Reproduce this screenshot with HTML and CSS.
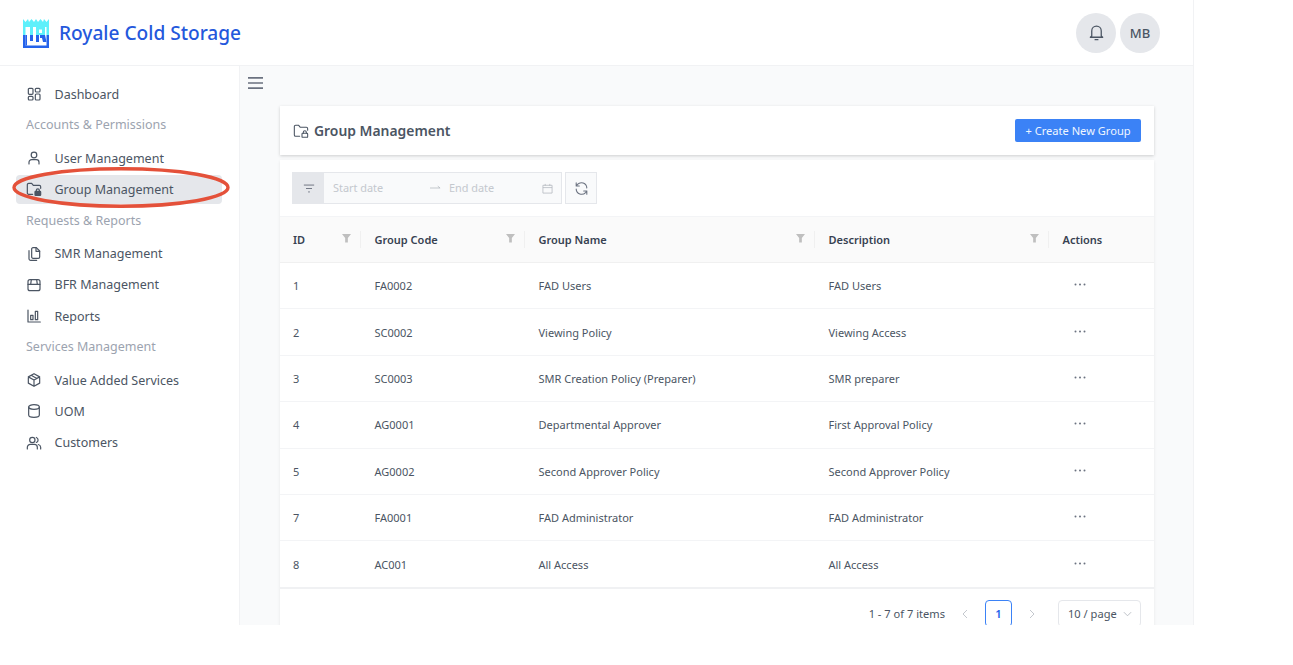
FILE: index.html
```html
<!DOCTYPE html>
<html lang="en">
<head>
<meta charset="utf-8">
<title>Royale Cold Storage</title>
<link rel="stylesheet" href="styles.css">
</head>
<body>
<div class="app">
  <header class="topbar">
    <div class="brand">
      <svg class="logo" viewBox="0 0 26 29" aria-hidden="true">
        <path fill="#5ef0fb" d="M0 0l2.500 3L5 0l1 3 2.500-3 2.500 3L13 0l2 3 2.500-3L20 3l1-3 2.500 3L26 0v16H0z"/>
        <rect fill="#2563eb" y="16" width="26" height="13"/>
        <rect fill="#fff" x="2.500" y="8" width="21" height="18.500"/>
        <rect fill="#5ef0fb" x="7" y="8" width="3" height="8"/>
        <rect fill="#2563eb" x="7" y="16" width="3" height="6"/>
        <rect fill="#2563eb" x="2.500" y="16" width="1.500" height="10.500"/>
        <path fill="#5ef0fb" d="M13 8h9v8h-6v-2h3v-3.500h-3V16h-3z"/>
        <path fill="#2563eb" d="M13 16h3v7h-3zM17 16h5l1.500 7H20l-1-4h-2z"/>
      </svg>
      <span class="brand-name">Royale Cold Storage</span>
    </div>
    <div class="top-actions">
      <button class="round" aria-label="Notifications">
        <svg class="ico-bell" viewBox="0 0 24 24"><path d="M6 16.500V10a6 6 0 0 1 12 0v6.500l1.800 1.500H4.200zM10.200 21h3.600"/></svg>
      </button>
      <div class="round">MB</div>
    </div>
  </header>
  <div class="body">
    <nav class="sidebar">
      <a class="nav-item"><svg class="ico" viewBox="0 0 24 24"><rect x="3.500" y="3.500" width="7" height="9" rx="1.500"/><rect x="14" y="3.500" width="7" height="5.500" rx="1.500"/><rect x="3.500" y="15.500" width="7" height="5.500" rx="1.500"/><rect x="14" y="12" width="7" height="9" rx="1.500"/></svg>Dashboard</a>
      <div class="nav-group">Accounts &amp; Permissions</div>
      <a class="nav-item"><svg class="ico" viewBox="0 0 24 24"><circle cx="12" cy="7.500" r="4.200"/><path d="M4.500 21v-2.500a4 4 0 0 1 4-4h7a4 4 0 0 1 4 4V21"/></svg>User Management</a>
      <a class="nav-item active"><svg class="ico" viewBox="0 0 24 24"><path d="M10 20H4a2 2 0 0 1-2-2V5.500a2 2 0 0 1 2-2h4.500l2.500 3h9a2 2 0 0 1 2 2v2.500"/><rect x="13.500" y="15.500" width="8.500" height="6" rx="1" fill="currentColor"/><path d="M15.500 15.500v-1.500a2.200 2.200 0 0 1 4.500 0v1.500"/></svg>Group Management</a>
      <div class="nav-group">Requests &amp; Reports</div>
      <a class="nav-item"><svg class="ico" viewBox="0 0 24 24"><path d="M8.500 4.500a2 2 0 0 1 2-2h5l5 5v9a2 2 0 0 1-2 2h-8a2 2 0 0 1-2-2z"/><path d="M15 2.500v5.500h5.500M4.500 7v12a2.500 2.500 0 0 0 2.500 2.500h9"/></svg>SMR Management</a>
      <a class="nav-item"><svg class="ico" viewBox="0 0 24 24"><rect x="3" y="4" width="18" height="16.500" rx="3"/><path d="M3 11h18M8 4l-1 7M16 4l1 7"/></svg>BFR Management</a>
      <a class="nav-item"><svg class="ico" viewBox="0 0 24 24"><path d="M3 3v18h18.500"/><rect x="7" y="11" width="3.500" height="6.500"/><rect x="14" y="5" width="3.500" height="12.500"/></svg>Reports</a>
      <div class="nav-group">Services Management</div>
      <a class="nav-item"><svg class="ico" viewBox="0 0 24 24"><path d="M12 2.500l8.500 4.800v9.400L12 21.500l-8.500-4.800V7.300zM3.500 7.300L12 12l8.500-4.700M12 12v9.500M7.700 4.900l8.600 4.800"/></svg>Value Added Services</a>
      <a class="nav-item"><svg class="ico" viewBox="0 0 24 24"><ellipse cx="12" cy="6" rx="8" ry="3.500"/><path d="M4 6v12c0 2 3.600 3.500 8 3.500s8-1.500 8-3.500V6"/></svg>UOM</a>
      <a class="nav-item"><svg class="ico" viewBox="0 0 24 24"><circle cx="9.500" cy="7.500" r="4"/><path d="M2 21v-2.500a4.500 4.500 0 0 1 4.500-4.500h6a4.500 4.500 0 0 1 4.500 4.500V21M15.500 3.700a4 4 0 0 1 0 7.500M18.500 14.300a4.500 4.500 0 0 1 3.500 4.200V21"/></svg>Customers</a>
    </nav>
    <main class="main">
      <button class="menu-btn" aria-label="Toggle menu">
        <svg viewBox="0 0 16 14"><path d="M0 1.500h16M0 7h16M0 12.500h16"/></svg>
      </button>
      <div class="content">
        <section class="title-card">
          <h1 class="title"><svg class="ico" viewBox="0 0 24 24"><path d="M10 20H4a2 2 0 0 1-2-2V5.500a2 2 0 0 1 2-2h4.500l2.500 3h9a2 2 0 0 1 2 2v2.500"/><rect x="13.500" y="15.500" width="8.500" height="6" rx="1"/><path d="M15.500 15.500v-1.500a2.200 2.200 0 0 1 4.500 0v1.500"/></svg>Group Management</h1>
          <button class="primary">+ Create New Group</button>
        </section>
        <section class="table-card">
          <div class="toolbar">
            <div class="range">
              <span class="range-filter"><svg viewBox="0 0 14 10"><path d="M1 1h12M3.500 5h7M6 9h2"/></svg></span>
              <span class="range-start">Start date</span>
              <svg class="range-arrow" viewBox="0 0 12 6"><path d="M0 3h11M8.500 1l2.500 2"/></svg>
              <span class="range-end">End date</span>
              <svg class="range-cal" viewBox="0 0 12 12"><path d="M1 2.500h10v8.500H1zM1 5h10M3.500 1v2M8.500 1v2"/></svg>
            </div>
            <button class="refresh" aria-label="Refresh"><svg viewBox="0 0 24 24"><path d="M20.500 11a8.700 8.700 0 0 0-15-5.500L3.500 8M3.500 13a8.700 8.700 0 0 0 15 5.500l2-2.500M3.500 3v5H8.500M20.500 21v-5H15.500"/></svg></button>
          </div>
          <table class="grid">
            <colgroup><col class="c1"><col class="c2"><col class="c3"><col class="c4"><col class="c5"></colgroup>
            <thead>
              <tr>
                <th><span class="th-in">ID<svg class="funnel" viewBox="0 0 10 10"><path d="M0 0h10L6.500 4.500V9.500H3.500V4.500z"/></svg></span></th>
                <th><span class="th-in">Group Code<svg class="funnel" viewBox="0 0 10 10"><path d="M0 0h10L6.500 4.500V9.500H3.500V4.500z"/></svg></span></th>
                <th><span class="th-in">Group Name<svg class="funnel" viewBox="0 0 10 10"><path d="M0 0h10L6.500 4.500V9.500H3.500V4.500z"/></svg></span></th>
                <th><span class="th-in">Description<svg class="funnel" viewBox="0 0 10 10"><path d="M0 0h10L6.500 4.500V9.500H3.500V4.500z"/></svg></span></th>
                <th>Actions</th>
              </tr>
            </thead>
            <tbody>
              <tr><td>1</td><td>FA0002</td><td>FAD Users</td><td>FAD Users</td><td><svg class="dots" viewBox="0 0 12 3"><circle cx="1.500" cy="1.500" r="1"/><circle cx="6" cy="1.500" r="1"/><circle cx="10.500" cy="1.500" r="1"/></svg></td></tr>
              <tr><td>2</td><td>SC0002</td><td>Viewing Policy</td><td>Viewing Access</td><td><svg class="dots" viewBox="0 0 12 3"><circle cx="1.500" cy="1.500" r="1"/><circle cx="6" cy="1.500" r="1"/><circle cx="10.500" cy="1.500" r="1"/></svg></td></tr>
              <tr><td>3</td><td>SC0003</td><td>SMR Creation Policy (Preparer)</td><td>SMR preparer</td><td><svg class="dots" viewBox="0 0 12 3"><circle cx="1.500" cy="1.500" r="1"/><circle cx="6" cy="1.500" r="1"/><circle cx="10.500" cy="1.500" r="1"/></svg></td></tr>
              <tr><td>4</td><td>AG0001</td><td>Departmental Approver</td><td>First Approval Policy</td><td><svg class="dots" viewBox="0 0 12 3"><circle cx="1.500" cy="1.500" r="1"/><circle cx="6" cy="1.500" r="1"/><circle cx="10.500" cy="1.500" r="1"/></svg></td></tr>
              <tr><td>5</td><td>AG0002</td><td>Second Approver Policy</td><td>Second Approver Policy</td><td><svg class="dots" viewBox="0 0 12 3"><circle cx="1.500" cy="1.500" r="1"/><circle cx="6" cy="1.500" r="1"/><circle cx="10.500" cy="1.500" r="1"/></svg></td></tr>
              <tr><td>7</td><td>FA0001</td><td>FAD Administrator</td><td>FAD Administrator</td><td><svg class="dots" viewBox="0 0 12 3"><circle cx="1.500" cy="1.500" r="1"/><circle cx="6" cy="1.500" r="1"/><circle cx="10.500" cy="1.500" r="1"/></svg></td></tr>
              <tr><td>8</td><td>AC001</td><td>All Access</td><td>All Access</td><td><svg class="dots" viewBox="0 0 12 3"><circle cx="1.500" cy="1.500" r="1"/><circle cx="6" cy="1.500" r="1"/><circle cx="10.500" cy="1.500" r="1"/></svg></td></tr>
            </tbody>
          </table>
          <div class="pager">
            <span class="pager-total">1 - 7 of 7 items</span>
            <svg class="chev" viewBox="0 0 6 10"><path d="M5 1L1 5l4 4"/></svg>
            <span class="page-num">1</span>
            <svg class="chev" viewBox="0 0 6 10"><path d="M1 1l4 4-4 4"/></svg>
            <span class="page-size">10 / page<svg class="chev-down" viewBox="0 0 10 6"><path d="M1 1l4 4 4-4"/></svg></span>
          </div>
        </section>
      </div>
    </main>
  </div>
  <svg class="annotation" viewBox="0 0 218 41" aria-hidden="true"><ellipse cx="109" cy="20.500" rx="107" ry="18.700"/></svg>
</div>
</body>
</html>
```
FILE: styles.css
```css
* { box-sizing: border-box; }
html, body { margin: 0; height: 100%; background: #fff; }
body { font-family: "Noto Sans", "Open Sans", sans-serif; color: #4b5563; overflow: hidden; }
svg { display: block; fill: none; stroke: currentColor; }
button { font: inherit; }

.app { position: relative; width: 1194px; height: 625px; display: flex; flex-direction: column; overflow: hidden; border-right: 1px solid #f1f2f4; }

.topbar { height: 66px; flex: none; display: flex; align-items: center; justify-content: space-between; padding: 0 33px 0 23px; background: #fff; border-bottom: 1px solid #f1f2f4; }
.brand { display: flex; align-items: center; gap: 10px; }
.logo { width: 26px; height: 29px; stroke: none; margin-top: 1px; }
.brand-name { font-size: 19.100px; font-weight: 500; color: #2458dc; }
.top-actions { display: flex; gap: 4px; }
.round { width: 40px; height: 40px; border-radius: 50%; border: 0; padding: 0; background: #e5e7eb; color: #4b5563; display: flex; align-items: center; justify-content: center; font-size: 13px; font-weight: 500; }
.ico-bell { width: 19px; height: 19px; stroke-width: 1.600; stroke-linecap: round; stroke-linejoin: round; }

.body { flex: 1; display: flex; min-height: 0; }
.sidebar { width: 240px; flex: none; background: #fff; border-right: 1px solid #f1f2f4; padding: 12.500px 16px 0; display: flex; flex-direction: column; }
.nav-item { height: 31.200px; display: flex; align-items: center; gap: 12.500px; padding-left: 10px; font-size: 12.500px; color: #4b5563; border-radius: 4px; flex: none; }
.nav-item.active { background: #e5e7eb; height: 29.200px; margin: 1px 0; width: 206px; }
.ico { width: 16px; height: 16px; flex: none; stroke-width: 1.800; stroke-linecap: round; stroke-linejoin: round; }
.nav-group { height: 33px; display: flex; align-items: center; padding: 0 0 3px 10px; font-size: 12.500px; color: #9ca3af; flex: none; }

.main { flex: 1; background: #f9fafb; min-width: 0; display: flex; flex-direction: column; }
.menu-btn { align-self: flex-start; border: 0; background: none; padding: 0; margin: 10px 0 0 8px; color: #6b7280; }
.menu-btn svg { width: 15px; height: 14px; stroke-width: 1.700; }
.content { margin: 16px 39px 0 40px; display: flex; flex-direction: column; gap: 5px; }
.title-card { height: 49px; display: flex; align-items: center; justify-content: space-between; background: #fff; padding: 0 13px; box-shadow: 0 1px 3px rgba(0,0,0,.18); }
.title { margin: 0; display: flex; align-items: center; gap: 5px; font-size: 13.900px; font-weight: 600; color: #4b5563; }
.title .ico { width: 16px; height: 16px; stroke-width: 1.600; }
.primary { height: 23px; width: 126px; border: 0; border-radius: 2px; padding: 0; background: #3b82f6; color: #eff6ff; font-size: 11.100px; }

.table-card { background: #fff; height: 480px; box-shadow: 0 1px 3px rgba(0,0,0,.08); }
.toolbar { display: flex; gap: 3px; padding: 12px; height: 56px; }
.range { width: 270px; height: 32px; display: flex; align-items: center; background: #f9fafb; border: 1px solid #e5e7eb; font-size: 10.900px; color: #c4c8ce; }
.range-filter { width: 31px; height: 30px; flex: none; display: flex; align-items: center; justify-content: center; background: #e5e7eb; color: #6b7280; }
.range-filter svg { width: 12px; height: 9px; stroke-width: 1.100; }
.range-start { margin: 0 0 2px 9px; width: 97px; }
.range-arrow { width: 11px; height: 6px; stroke-width: .8; color: #b0b5bc; }
.range-end { margin: 0 0 2px 8px; width: 93px; }
.range-cal { width: 11px; height: 11px; stroke-width: .8; color: #b0b5bc; }
.refresh { width: 32px; height: 32px; padding: 0; border: 1px solid #e5e7eb; background: #f9fafb; color: #6b7280; display: flex; align-items: center; justify-content: center; }
.refresh svg { width: 15px; height: 15px; stroke-width: 1.700; stroke-linecap: round; stroke-linejoin: round; }

.grid { width: 874px; border-collapse: collapse; table-layout: fixed; font-size: 11px; color: #4b5563; }
.c1 { width: 81px; } .c2 { width: 164px; } .c3 { width: 290px; } .c4 { width: 234px; } .c5 { width: 105px; }
.grid th { height: 46px; padding: 0 0 0 13.500px; background: #fafafa; text-align: left; font-size: 11px; font-weight: 600; color: #374151; border-top: 1px solid #f3f4f6; border-bottom: 1px solid #f0f0f0; }
.grid th:first-child, .grid td:first-child { padding-left: 13px; }
.th-in { display: flex; align-items: center; justify-content: space-between; padding-right: 10px; height: 17px; border-right: 1px solid #f0f0f0; }
.funnel { width: 9px; height: 9px; fill: #bfbfbf; stroke: none; margin: -3px -1px 0 0; }
.grid td { height: 46.400px; padding: 0 0 0 13.500px; border-bottom: 1px solid #f3f4f6; }
.grid tbody tr:last-child td { height: 47.400px; border-bottom: 2px solid #f0f1f3; }
.dots { width: 12px; height: 3px; fill: #6b7280; stroke: none; margin: -2px 0 0 11px; }

.pager { display: flex; align-items: center; justify-content: flex-end; padding: 11px 13px 0 0; font-size: 11.100px; color: #4b5563; }
.pager-total { margin-right: 17px; }
.chev { width: 6px; height: 10px; stroke-width: 1; color: #c4c8ce; }
.page-num { width: 27px; height: 27px; margin: 0 17px 0 17px; border: 1px solid #3b82f6; border-radius: 4px; color: #2563eb; font-weight: 600; display: flex; align-items: center; justify-content: center; }
.page-size { width: 83px; height: 27px; margin-left: 23px; border: 1px solid #e5e7eb; border-radius: 4px; display: flex; align-items: center; gap: 6px; padding-left: 9px; }
.chev-down { width: 9px; height: 6px; stroke-width: 1; color: #b6bac1; }

.annotation { position: absolute; left: 12px; top: 167px; width: 218px; height: 41px; }
.annotation ellipse { fill: none; stroke: #e4513a; stroke-width: 3.400; }
```
